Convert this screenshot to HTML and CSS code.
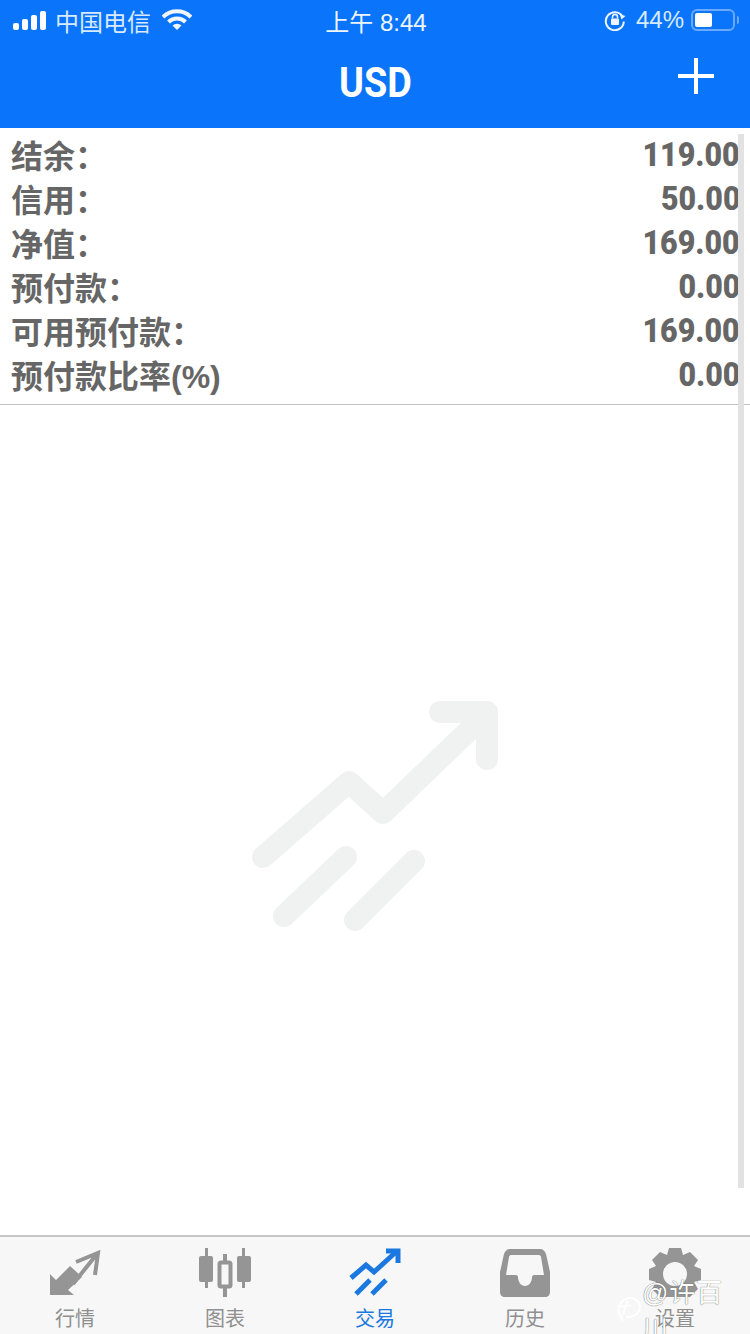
FILE: index.html
```html
<!DOCTYPE html>
<html lang="zh-CN">
<head>
    <meta charset="UTF-8">
    <meta name="viewport" content="width=device-width, initial-scale=1.0">
    <title>USD</title>
    <link rel="stylesheet" href="styles.css">
</head>
<body>
    <div class="app">
        <div class="top">
            <div class="status">
                <div class="status-left">
                    <svg class="signal" width="34" height="20" viewBox="0 0 34 20">
                        <rect x="0" y="13" width="6" height="7" rx="2"/>
                        <rect x="9" y="9" width="6" height="11" rx="2"/>
                        <rect x="18" y="5" width="6" height="15" rx="2"/>
                        <rect x="27" y="1" width="6" height="19" rx="2"/>
                    </svg>
                    <span class="carrier">中国电信</span>
                    <svg class="wifi" width="30" height="22" viewBox="0 0 30 22">
                        <path d="M1 8 A20 20 0 0 1 29 8" />
                        <path d="M6.500 13 A12 12 0 0 1 23.500 13" />
                        <path class="wifi-dot" d="M15 21 L10.500 16.500 A6.500 6.500 0 0 1 19.500 16.500 Z"/>
                    </svg>
                </div>
                <div class="clock">上午 8:44</div>
                <div class="status-right">
                    <svg class="lock" width="22" height="22" viewBox="0 0 22 22">
                        <path class="lock-ring" d="M18.500 7.500 A9 9 0 1 0 19.800 12.500"/>
                        <path class="lock-fill" d="M16 5.500 L21.500 7 L17.500 10.500 Z"/>
                        <rect class="lock-fill" x="7" y="9.500" width="8" height="6.500" rx="1"/>
                        <path class="lock-shackle" d="M8.500 9.500 V8 A2.500 2.500 0 0 1 13.500 8 V9.500"/>
                    </svg>
                    <span class="percent">44%</span>
                    <div class="battery"><div class="battery-level"></div></div>
                    <div class="battery-tip"></div>
                </div>
            </div>
            <div class="nav">
                <h1 class="nav-title">USD</h1>
                <svg class="nav-add" width="38" height="38" viewBox="0 0 38 38">
                    <path d="M19 1 V37 M1 19 H37"/>
                </svg>
            </div>
        </div>

        <div class="summary">
            <div class="row"><span>结余：</span><b>119.00</b></div>
            <div class="row"><span>信用：</span><b>50.00</b></div>
            <div class="row"><span>净值：</span><b>169.00</b></div>
            <div class="row"><span>预付款：</span><b>0.00</b></div>
            <div class="row"><span>可用预付款：</span><b>169.00</b></div>
            <div class="row"><span>预付款比率(%)</span><b>0.00</b></div>
        </div>

        <div class="empty">
            <svg class="empty-icon" width="250" height="235" viewBox="0 0 250 235">
                <path d="M12 157 L98 82 L132 113 L234 15"/>
                <path d="M189 12 H236 V59"/>
                <path d="M33 216 L95 157"/>
                <path d="M104 220 L163 161"/>
            </svg>
        </div>

        <div class="tabs">
            <div class="tab">
                <svg width="54" height="48" viewBox="0 0 54 48">
                    <path class="tab-fill" d="M2 46 V25 L8 31 L22 17 L34 28 L20 41 L26 46 Z"/>
                    <path class="tab-line" d="M28 13 L50 4 L47 26 M49 5 L25 35"/>
                </svg>
                <span>行情</span>
            </div>
            <div class="tab">
                <svg width="54" height="50" viewBox="0 0 54 50">
                    <rect class="tab-fill" x="1" y="8" width="14" height="26" rx="2"/>
                    <rect class="tab-fill" x="7" y="0" width="3" height="40"/>
                    <rect class="tab-fill" x="39" y="8" width="14" height="26" rx="2"/>
                    <rect class="tab-fill" x="44" y="0" width="3" height="40"/>
                    <rect class="tab-hollow" x="21.500" y="14.500" width="11" height="24" rx="1.500"/>
                    <path class="tab-hollow" d="M27 6 V14 M27 39 V49"/>
                </svg>
                <span>图表</span>
            </div>
            <div class="tab tab-active">
                <svg width="54" height="50" viewBox="0 0 54 50">
                    <path class="tab-active-line" d="M3 30 L18 17 L26 24 L49 3"/>
                    <path class="tab-active-line" d="M38 3 H50 V15"/>
                    <path class="tab-active-line" d="M8 46 L22 32"/>
                    <path class="tab-active-line" d="M24 46 L38 32"/>
                </svg>
                <span>交易</span>
            </div>
            <div class="tab">
                <svg width="52" height="50" viewBox="0 0 52 50">
                    <path class="tab-fill" fill-rule="evenodd" d="M11 1 H41 C44 1 46 3 47 6 L51 24 V44 C51 47 49 49 46 49 H6 C3 49 1 47 1 44 V24 L5 6 C6 3 8 1 11 1 Z M12 7 C11 7 10 8 10 9 L7 27 H17 C18 27 19 28 19 29 C19 34 22 38 26 38 C30 38 33 34 33 29 C33 28 34 27 35 27 H45 L42 9 C42 8 41 7 40 7 Z"/>
                </svg>
                <span>历史</span>
            </div>
            <div class="tab">
                <svg width="52" height="50" viewBox="0 0 52 50">
                    <circle class="tab-gear" cx="26" cy="26" r="15"/>
                    <path class="tab-fill" d="M20 0 H32 L34 7 L41 4 L49 12 L45 18 L52 21 V32 L45 34 L49 41 L41 49 H11 L3 41 L7 34 L0 32 V21 L7 18 L3 12 L11 4 L18 7 Z"/>
                    <circle class="tab-hole" cx="26" cy="26" r="12"/>
                </svg>
                <span>设置</span>
            </div>
        </div>

        <div class="scrollbar"></div>

        <div class="watermark">
            <svg width="28" height="32" viewBox="0 0 28 32">
                <path d="M8 29 C10 26 6 24 5 20 C3 12 9 5 16 5 C22 5 26 9 26 14 C26 21 18 25 12 24"/>
                <path d="M7 14 C10 12 13 14 17 12 M14 8 C11 12 11 18 9 22"/>
            </svg>
            <span>@许百川</span>
        </div>
    </div>
</body>
</html>
```

FILE: styles.css
```css
* {
    box-sizing: border-box;
}
html, body {
    margin: 0;
    padding: 0;
}
body {
    font-family: "Liberation Sans", "Noto Sans CJK SC", sans-serif;
    background-color: #fff;
}
.app {
    position: relative;
    width: 750px;
    height: 1334px;
    display: flex;
    flex-direction: column;
    overflow: hidden;
}

/* header */
.top {
    height: 128px;
    background-color: #0a75fb;
    color: #fff;
    flex: none;
}
.status {
    height: 40px;
    display: grid;
    grid-template-columns: 1fr auto 1fr;
    align-items: center;
    padding: 0 11px 0 13px;
}
.status-left, .status-right {
    display: flex;
    align-items: center;
}
.status-right {
    justify-content: flex-end;
}
.signal {
    fill: #fff;
    margin-right: 8px;
}
.carrier {
    font-size: 24px;
    color: #d8eaff;
    letter-spacing: 0;
    margin-right: 11px;
}
.wifi {
    fill: none;
    stroke: #f0f6ff;
    stroke-width: 4;
}
.wifi-dot {
    fill: #f0f6ff;
    stroke: none;
}
.clock {
    font-size: 24px;
    color: #eef5ff;
}
.lock {
    margin-right: 10px;
}
.lock-ring {
    fill: none;
    stroke: #f0f6ff;
    stroke-width: 2;
}
.lock-fill {
    fill: #f0f6ff;
}
.lock-shackle {
    fill: none;
    stroke: #f0f6ff;
    stroke-width: 1.500;
}
.percent {
    font-size: 24px;
    color: #d8eaff;
    margin-right: 7px;
}
.battery {
    width: 44px;
    height: 22px;
    border: 2px solid #6aa9fb;
    border-radius: 6px;
    padding: 2px;
}
.battery-level {
    width: 17px;
    height: 100%;
    background-color: #fff;
    border-radius: 2px;
}
.battery-tip {
    width: 2px;
    height: 8px;
    margin-left: 2px;
    background-color: #6aa9fb;
    border-radius: 0 2px 2px 0;
}
.nav {
    position: relative;
    height: 88px;
    display: flex;
    align-items: center;
    justify-content: center;
    padding-bottom: 4px;
}
.nav-title {
    margin: 0;
    font-family: Roboto, sans-serif;
    font-size: 42px;
    font-weight: 700;
    transform: scaleX(0.9);
}
.nav-add {
    position: absolute;
    right: 35px;
    top: 17px;
    stroke: #fff;
    stroke-width: 4;
}

/* account summary */
.summary {
    flex: none;
    height: 277px;
    padding: 4px 10px 0 11px;
    border-bottom: 1px solid #c4c4c4;
}
.row {
    height: 44px;
    display: flex;
    align-items: center;
    justify-content: space-between;
    color: #666;
    font-size: 32px;
    font-weight: 700;
}
.row span {
    letter-spacing: 0;
}
.row b {
    font-family: Roboto, sans-serif;
    font-size: 33px;
    transform: scaleX(0.92);
    transform-origin: right center;
}

/* empty state */
.empty {
    flex: 1;
    display: flex;
    justify-content: center;
    padding: 295px 0 0 1px;
}
.empty-icon {
    fill: none;
    stroke: #f0f1f1;
    stroke-width: 22;
    stroke-linecap: round;
    stroke-linejoin: round;
}

/* bottom tabs */
.tabs {
    flex: none;
    height: 99px;
    display: flex;
    background-color: #f7f7f7;
    border-top: 2px solid #c6c6c6;
}
.tab {
    flex: 1;
    display: flex;
    flex-direction: column;
    align-items: center;
    padding-top: 11px;
    color: #8f8f8f;
    font-size: 20px;
    line-height: 24px;
}
.tab svg {
    height: 50px;
    flex: none;
}
.tab span {
    margin-top: 9px;
}
.tab-fill {
    fill: #959595;
}
.tab-line {
    fill: none;
    stroke: #959595;
    stroke-width: 4;
}
.tab-hollow {
    fill: none;
    stroke: #959595;
    stroke-width: 4;
}
.tab-gear {
    fill: #959595;
}
.tab-hole {
    fill: #f7f7f7;
}
.tab-active {
    color: #1a78e0;
}
.tab-active-line {
    fill: none;
    stroke: #1a78e0;
    stroke-width: 5;
}

/* overlays */
.scrollbar {
    position: absolute;
    left: 738px;
    top: 134px;
    width: 6px;
    height: 1054px;
    background-color: #e2e2e2;
}
.watermark {
    position: absolute;
    left: 614px;
    top: 1272px;
    display: flex;
    align-items: center;
    color: #fff;
    font-size: 26px;
    text-shadow: 0 0 1px #333;
}
.watermark svg {
    fill: none;
    stroke: #fff;
    stroke-width: 2;
}
.watermark span {
    letter-spacing: 1px;
}
```
